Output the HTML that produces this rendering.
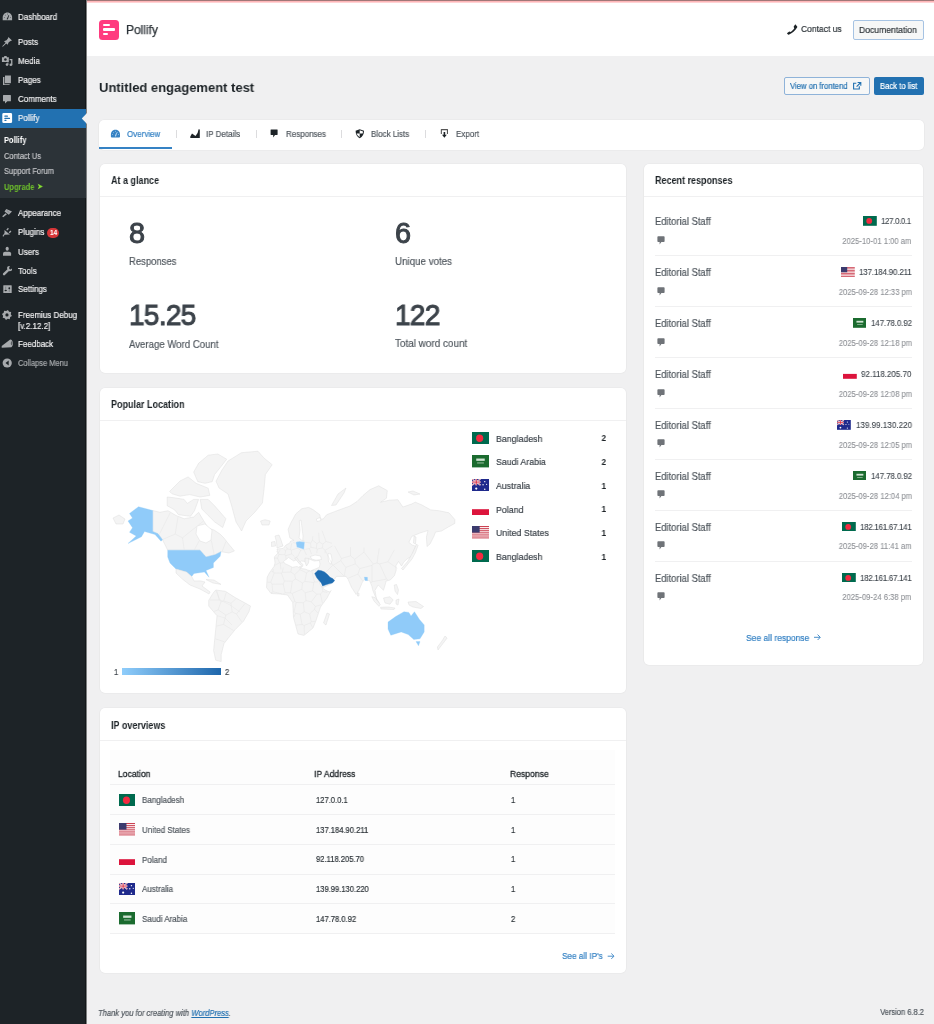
<!DOCTYPE html>
<html><head><meta charset="utf-8"><title>Pollify</title>
<style>
html,body{margin:0;padding:0;width:934px;height:1024px;overflow:hidden;background:#f0f0f1;}
body{position:relative;font-family:"Liberation Sans", sans-serif;}
.t{position:absolute;line-height:1;white-space:nowrap;will-change:transform;}
.r{position:absolute;}
</style></head><body>
<div class="r" style="left:0px;top:0px;width:934px;height:1024px;background:#f0f0f1;"></div>
<div class="r" style="left:0px;top:0px;width:86px;height:1024px;background:#1d2327;"></div>
<div class="r" style="left:85px;top:0px;width:1px;height:1024px;background:#131719;"></div>
<div class="r" style="left:86px;top:0px;width:1px;height:1024px;background:#7d7f80;"></div>
<div class="r" style="left:0px;top:109px;width:86px;height:19px;background:#2271b1;"></div>
<div class="r" style="left:0px;top:128px;width:86px;height:70px;background:#2c3338;"></div>
<svg class="r" style="left:81px;top:113px" width="6" height="11"><path d="M6 0 L0.8 5.5 L6 11 Z" fill="#f0f0f1"/></svg>
<div class="r" style="left:87px;top:0px;width:847px;height:56px;background:#ffffff;"></div>
<div class="r" style="left:87px;top:0px;width:847px;height:1px;background:#a07878;"></div>
<div class="r" style="left:87px;top:1px;width:847px;height:1px;background:#ffb6b8;"></div>
<div class="r" style="left:87px;top:2px;width:847px;height:1px;background:#ffd3d5;"></div>
<div class="t" style="left:17.60px;top:13.08px;font-size:8.960px;color:#f0f0f1;transform:scaleX(0.8929);transform-origin:left top;-webkit-text-stroke:0.2px #f0f0f1;">Dashboard</div>
<div class="t" style="left:17.60px;top:38.18px;font-size:8.960px;color:#f0f0f1;transform:scaleX(0.8929);transform-origin:left top;-webkit-text-stroke:0.2px #f0f0f1;">Posts</div>
<div class="t" style="left:17.60px;top:57.08px;font-size:8.960px;color:#f0f0f1;transform:scaleX(0.8929);transform-origin:left top;-webkit-text-stroke:0.2px #f0f0f1;">Media</div>
<div class="t" style="left:17.60px;top:76.18px;font-size:8.960px;color:#f0f0f1;transform:scaleX(0.8929);transform-origin:left top;-webkit-text-stroke:0.2px #f0f0f1;">Pages</div>
<div class="t" style="left:17.60px;top:95.28px;font-size:8.960px;color:#f0f0f1;transform:scaleX(0.8929);transform-origin:left top;-webkit-text-stroke:0.2px #f0f0f1;">Comments</div>
<div class="t" style="left:17.60px;top:114.38px;font-size:8.960px;color:#f0f0f1;transform:scaleX(0.8929);transform-origin:left top;-webkit-text-stroke:0.2px #f0f0f1;">Pollify</div>
<div class="t" style="left:17.60px;top:209.18px;font-size:8.960px;color:#f0f0f1;transform:scaleX(0.8929);transform-origin:left top;-webkit-text-stroke:0.2px #f0f0f1;">Appearance</div>
<div class="t" style="left:17.60px;top:228.18px;font-size:8.960px;color:#f0f0f1;transform:scaleX(0.8929);transform-origin:left top;-webkit-text-stroke:0.2px #f0f0f1;">Plugins</div>
<div class="t" style="left:17.60px;top:247.58px;font-size:8.960px;color:#f0f0f1;transform:scaleX(0.8929);transform-origin:left top;-webkit-text-stroke:0.2px #f0f0f1;">Users</div>
<div class="t" style="left:17.60px;top:266.58px;font-size:8.960px;color:#f0f0f1;transform:scaleX(0.8929);transform-origin:left top;-webkit-text-stroke:0.2px #f0f0f1;">Tools</div>
<div class="t" style="left:17.60px;top:285.08px;font-size:8.960px;color:#f0f0f1;transform:scaleX(0.8929);transform-origin:left top;-webkit-text-stroke:0.2px #f0f0f1;">Settings</div>
<div class="t" style="left:17.60px;top:310.88px;font-size:8.960px;color:#f0f0f1;transform:scaleX(0.8929);transform-origin:left top;-webkit-text-stroke:0.2px #f0f0f1;">Freemius Debug</div>
<div class="t" style="left:17.60px;top:321.58px;font-size:8.960px;color:#f0f0f1;transform:scaleX(0.8929);transform-origin:left top;-webkit-text-stroke:0.2px #f0f0f1;">[v.2.12.2]</div>
<div class="t" style="left:17.60px;top:339.98px;font-size:8.960px;color:#f0f0f1;transform:scaleX(0.8929);transform-origin:left top;-webkit-text-stroke:0.2px #f0f0f1;">Feedback</div>
<div class="t" style="left:17.60px;top:358.66px;font-size:8.400px;color:#a7aaad;transform:scaleX(0.8929);transform-origin:left top;-webkit-text-stroke-width:0.2px;">Collapse Menu</div>
<div class="t" style="left:4.10px;top:135.56px;font-size:8.400px;color:#ffffff;transform:scaleX(0.8929);transform-origin:left top;font-weight:700;">Pollify</div>
<div class="t" style="left:4.10px;top:151.66px;font-size:8.400px;color:#c3c4c7;transform:scaleX(0.8929);transform-origin:left top;-webkit-text-stroke-width:0.2px;">Contact Us</div>
<div class="t" style="left:4.10px;top:167.26px;font-size:8.400px;color:#c3c4c7;transform:scaleX(0.8929);transform-origin:left top;-webkit-text-stroke-width:0.2px;">Support Forum</div>
<div class="t" style="left:4.10px;top:182.66px;font-size:8.400px;color:#6dbf2b;transform:scaleX(0.8929);transform-origin:left top;font-weight:700;">Upgrade</div>
<div class="t" style="left:37.40px;top:183.34px;font-size:7.840px;color:#86e033;transform:scaleX(0.8929);transform-origin:left top;-webkit-text-stroke-width:0.2px;">&#10148;</div>
<div class="r" style="left:47px;top:227.5px;width:12px;height:10px;border-radius:5px;background:#d63638;"></div>
<div class="t" style="left:49.90px;top:230.49px;font-size:6.600px;color:#fff;font-weight:700;letter-spacing:-0.2px;">14</div>
<div class="r" style="left:99px;top:20px;width:19.5px;height:19.5px;border-radius:3.5px;background:#ff3b7f;"></div>
<div class="r" style="left:103px;top:24.2px;width:6.799999999999997px;height:2.3000000000000007px;background:#fff;border-radius:1px;"></div>
<div class="r" style="left:103px;top:28.4px;width:11.599999999999994px;height:2.400000000000002px;background:#fff;border-radius:1px;"></div>
<div class="r" style="left:103px;top:32.7px;width:4.5px;height:2.299999999999997px;background:#fff;border-radius:1px;"></div>
<div class="t" style="left:126.00px;top:23.69px;font-size:12.360px;color:#2c3338;transform:scaleX(0.9709);transform-origin:left top;-webkit-text-stroke-width:0.25px;">Pollify</div>
<div class="t" style="left:800.60px;top:24.31px;font-size:9.520px;color:#2c3338;transform:scaleX(0.8929);transform-origin:left top;-webkit-text-stroke-width:0.2px;">Contact us</div>
<div class="r" style="left:853px;top:20px;width:68.5px;height:17.5px;border:1px solid #a6c3e3;border-radius:2px;background:#f6f7f7;"></div>
<div class="t" style="left:859.20px;top:24.81px;font-size:9.632px;color:#2c3338;transform:scaleX(0.8929);transform-origin:left top;-webkit-text-stroke-width:0.2px;">Documentation</div>
<div class="t" style="left:98.60px;top:80.82px;font-size:13.390px;color:#1d2327;transform:scaleX(0.9709);transform-origin:left top;font-weight:700;">Untitled engagement test</div>
<div class="r" style="left:784px;top:77px;width:83.5px;height:15.5px;border:1px solid #8fb3d9;border-radius:2px;background:#f6f7f7;"></div>
<div class="t" style="left:790.30px;top:82.27px;font-size:8.624px;color:#2271b1;transform:scaleX(0.8929);transform-origin:left top;-webkit-text-stroke-width:0.2px;">View on frontend</div>
<div class="r" style="left:874px;top:77px;width:49.5px;height:17.5px;border-radius:2px;background:#2271b1;"></div>
<div class="t" style="left:880.20px;top:82.27px;font-size:8.624px;color:#ffffff;transform:scaleX(0.8929);transform-origin:left top;-webkit-text-stroke-width:0.2px;">Back to list</div>
<div class="r" style="left:99px;top:120px;width:824.5px;height:29.6px;border-radius:5px;background:#fff;box-shadow:0 0 0 0.6px #e6e6e7;"></div>
<div class="r" style="left:99px;top:147px;width:72.5px;height:2px;background:#3582c4;"></div>
<div class="t" style="left:126.90px;top:130.08px;font-size:8.960px;color:#3582c4;transform:scaleX(0.8929);transform-origin:left top;-webkit-text-stroke-width:0.2px;">Overview</div>
<div class="t" style="left:205.90px;top:130.08px;font-size:8.960px;color:#50575e;transform:scaleX(0.8929);transform-origin:left top;-webkit-text-stroke-width:0.2px;">IP Details</div>
<div class="t" style="left:285.80px;top:130.08px;font-size:8.960px;color:#50575e;transform:scaleX(0.8929);transform-origin:left top;-webkit-text-stroke-width:0.2px;">Responses</div>
<div class="t" style="left:371.00px;top:130.08px;font-size:8.960px;color:#50575e;transform:scaleX(0.8929);transform-origin:left top;-webkit-text-stroke-width:0.2px;">Block Lists</div>
<div class="t" style="left:455.80px;top:130.08px;font-size:8.960px;color:#50575e;transform:scaleX(0.8929);transform-origin:left top;-webkit-text-stroke-width:0.2px;">Export</div>
<div class="r" style="left:176px;top:129.8px;width:1px;height:8.0px;background:#dcdcde;"></div>
<div class="r" style="left:255.5px;top:129.8px;width:1.0px;height:8.0px;background:#dcdcde;"></div>
<div class="r" style="left:341px;top:129.8px;width:1px;height:8.0px;background:#dcdcde;"></div>
<div class="r" style="left:425.3px;top:129.8px;width:1.0px;height:8.0px;background:#dcdcde;"></div>
<div class="r" style="left:99.5px;top:164px;width:526.5px;height:208.7px;border-radius:5px;background:#fff;box-shadow:0 0 0 0.6px #e6e6e7;"></div>
<div class="r" style="left:99.5px;top:196px;width:526.5px;height:1px;background:#f0f0f1;"></div>
<div class="t" style="left:110.90px;top:176.23px;font-size:10.080px;color:#1d2327;transform:scaleX(0.8929);transform-origin:left top;font-weight:700;">At a glance</div>
<div class="r" style="left:99.5px;top:387.7px;width:526.5px;height:305.3px;border-radius:5px;background:#fff;box-shadow:0 0 0 0.6px #e6e6e7;"></div>
<div class="r" style="left:99.5px;top:420.2px;width:526.5px;height:1.0px;background:#f0f0f1;"></div>
<div class="t" style="left:110.90px;top:400.43px;font-size:10.080px;color:#1d2327;transform:scaleX(0.8929);transform-origin:left top;font-weight:700;">Popular Location</div>
<div class="r" style="left:99.5px;top:708.4px;width:526.5px;height:264.30000000000007px;border-radius:5px;background:#fff;box-shadow:0 0 0 0.6px #e6e6e7;"></div>
<div class="r" style="left:99.5px;top:739.5px;width:526.5px;height:1.0px;background:#f0f0f1;"></div>
<div class="t" style="left:110.90px;top:720.73px;font-size:10.080px;color:#1d2327;transform:scaleX(0.8929);transform-origin:left top;font-weight:700;">IP overviews</div>
<div class="r" style="left:643.7px;top:163.7px;width:279.29999999999995px;height:501.8px;border-radius:5px;background:#fff;box-shadow:0 0 0 0.6px #e6e6e7;"></div>
<div class="r" style="left:643.7px;top:196.2px;width:279.29999999999995px;height:1.0px;background:#f0f0f1;"></div>
<div class="t" style="left:655.10px;top:176.13px;font-size:10.080px;color:#1d2327;transform:scaleX(0.8929);transform-origin:left top;font-weight:700;">Recent responses</div>
<div class="t" style="left:128.60px;top:218.69px;font-size:28.840px;color:#3c434a;transform:scaleX(0.9709);transform-origin:left top;letter-spacing:-0.7px;-webkit-text-stroke:1.0px #3c434a;">8</div>
<div class="t" style="left:395.20px;top:218.69px;font-size:28.840px;color:#3c434a;transform:scaleX(0.9709);transform-origin:left top;letter-spacing:-0.7px;-webkit-text-stroke:1.0px #3c434a;">6</div>
<div class="t" style="left:128.60px;top:301.29px;font-size:28.840px;color:#3c434a;transform:scaleX(0.9709);transform-origin:left top;letter-spacing:-0.7px;-webkit-text-stroke:1.0px #3c434a;">15.25</div>
<div class="t" style="left:395.20px;top:301.29px;font-size:28.840px;color:#3c434a;transform:scaleX(0.9709);transform-origin:left top;letter-spacing:-0.7px;-webkit-text-stroke:1.0px #3c434a;">122</div>
<div class="t" style="left:128.80px;top:256.06px;font-size:10.640px;color:#50575e;transform:scaleX(0.8929);transform-origin:left top;-webkit-text-stroke-width:0.2px;">Responses</div>
<div class="t" style="left:395.40px;top:255.80px;font-size:10.942px;color:#50575e;transform:scaleX(0.8929);transform-origin:left top;-webkit-text-stroke-width:0.2px;">Unique votes</div>
<div class="t" style="left:128.80px;top:338.64px;font-size:10.774px;color:#50575e;transform:scaleX(0.8929);transform-origin:left top;-webkit-text-stroke-width:0.2px;">Average Word Count</div>
<div class="t" style="left:395.40px;top:338.35px;font-size:11.122px;color:#50575e;transform:scaleX(0.8929);transform-origin:left top;-webkit-text-stroke-width:0.2px;">Total word count</div>
<div class="t" style="left:655.30px;top:216.45px;font-size:10.528px;color:#50575e;transform:scaleX(0.8929);transform-origin:left top;-webkit-text-stroke-width:0.2px;">Editorial Staff</div>
<div class="t" style="left:881.40px;top:217.38px;font-size:8.960px;color:#3c434a;transform:scaleX(0.8929);transform-origin:left top;letter-spacing:-0.445px;-webkit-text-stroke-width:0.1px;">127.0.0.1</div>
<div class="t" style="right:22.20px;top:237.06px;font-size:8.512px;color:#8c8f94;transform:scaleX(0.8929);transform-origin:right top;letter-spacing:0.05px;-webkit-text-stroke-width:0.1px;">2025-10-01 1:00 am</div>
<div class="r" style="left:655.3px;top:255.1px;width:256.5px;height:1.0000000000000284px;background:#f0f0f1;"></div>
<svg class="r" style="left:656.5px;top:235.80px" width="8" height="9" viewBox="0 0 8 9"><path d="M1.2 0.3H6.8Q7.6 0.3 7.6 1.1V5.2Q7.6 6 6.8 6H4.4L2.6 8.6V6H1.2Q0.4 6 0.4 5.2V1.1Q0.4 0.3 1.2 0.3Z" fill="#6f7378"/></svg>
<div class="t" style="left:655.30px;top:267.35px;font-size:10.528px;color:#50575e;transform:scaleX(0.8929);transform-origin:left top;-webkit-text-stroke-width:0.2px;">Editorial Staff</div>
<div class="t" style="left:858.80px;top:268.28px;font-size:8.960px;color:#3c434a;transform:scaleX(0.8929);transform-origin:left top;letter-spacing:-0.191px;-webkit-text-stroke-width:0.1px;">137.184.90.211</div>
<div class="t" style="right:22.20px;top:287.96px;font-size:8.512px;color:#8c8f94;transform:scaleX(0.8929);transform-origin:right top;letter-spacing:0.05px;-webkit-text-stroke-width:0.1px;">2025-09-28 12:33 pm</div>
<div class="r" style="left:655.3px;top:306.0px;width:256.5px;height:1.0px;background:#f0f0f1;"></div>
<svg class="r" style="left:656.5px;top:286.70px" width="8" height="9" viewBox="0 0 8 9"><path d="M1.2 0.3H6.8Q7.6 0.3 7.6 1.1V5.2Q7.6 6 6.8 6H4.4L2.6 8.6V6H1.2Q0.4 6 0.4 5.2V1.1Q0.4 0.3 1.2 0.3Z" fill="#6f7378"/></svg>
<div class="t" style="left:655.30px;top:318.25px;font-size:10.528px;color:#50575e;transform:scaleX(0.8929);transform-origin:left top;-webkit-text-stroke-width:0.2px;">Editorial Staff</div>
<div class="t" style="left:870.50px;top:319.18px;font-size:8.960px;color:#3c434a;transform:scaleX(0.8929);transform-origin:left top;letter-spacing:-0.131px;-webkit-text-stroke-width:0.1px;">147.78.0.92</div>
<div class="t" style="right:22.20px;top:338.86px;font-size:8.512px;color:#8c8f94;transform:scaleX(0.8929);transform-origin:right top;letter-spacing:0.05px;-webkit-text-stroke-width:0.1px;">2025-09-28 12:18 pm</div>
<div class="r" style="left:655.3px;top:356.9px;width:256.5px;height:1.0px;background:#f0f0f1;"></div>
<svg class="r" style="left:656.5px;top:337.60px" width="8" height="9" viewBox="0 0 8 9"><path d="M1.2 0.3H6.8Q7.6 0.3 7.6 1.1V5.2Q7.6 6 6.8 6H4.4L2.6 8.6V6H1.2Q0.4 6 0.4 5.2V1.1Q0.4 0.3 1.2 0.3Z" fill="#6f7378"/></svg>
<div class="t" style="left:655.30px;top:369.15px;font-size:10.528px;color:#50575e;transform:scaleX(0.8929);transform-origin:left top;-webkit-text-stroke-width:0.2px;">Editorial Staff</div>
<div class="t" style="left:861.20px;top:370.08px;font-size:8.960px;color:#3c434a;transform:scaleX(0.8929);transform-origin:left top;letter-spacing:-0.017px;-webkit-text-stroke-width:0.1px;">92.118.205.70</div>
<div class="t" style="right:22.20px;top:389.76px;font-size:8.512px;color:#8c8f94;transform:scaleX(0.8929);transform-origin:right top;letter-spacing:0.05px;-webkit-text-stroke-width:0.1px;">2025-09-28 12:08 pm</div>
<div class="r" style="left:655.3px;top:407.79999999999995px;width:256.5px;height:1.0px;background:#f0f0f1;"></div>
<svg class="r" style="left:656.5px;top:388.50px" width="8" height="9" viewBox="0 0 8 9"><path d="M1.2 0.3H6.8Q7.6 0.3 7.6 1.1V5.2Q7.6 6 6.8 6H4.4L2.6 8.6V6H1.2Q0.4 6 0.4 5.2V1.1Q0.4 0.3 1.2 0.3Z" fill="#6f7378"/></svg>
<div class="t" style="left:655.30px;top:420.05px;font-size:10.528px;color:#50575e;transform:scaleX(0.8929);transform-origin:left top;-webkit-text-stroke-width:0.2px;">Editorial Staff</div>
<div class="t" style="left:855.60px;top:420.98px;font-size:8.960px;color:#3c434a;transform:scaleX(0.8929);transform-origin:left top;letter-spacing:0.034px;-webkit-text-stroke-width:0.1px;">139.99.130.220</div>
<div class="t" style="right:22.20px;top:440.66px;font-size:8.512px;color:#8c8f94;transform:scaleX(0.8929);transform-origin:right top;letter-spacing:0.05px;-webkit-text-stroke-width:0.1px;">2025-09-28 12:05 pm</div>
<div class="r" style="left:655.3px;top:458.7px;width:256.5px;height:1.0px;background:#f0f0f1;"></div>
<svg class="r" style="left:656.5px;top:439.40px" width="8" height="9" viewBox="0 0 8 9"><path d="M1.2 0.3H6.8Q7.6 0.3 7.6 1.1V5.2Q7.6 6 6.8 6H4.4L2.6 8.6V6H1.2Q0.4 6 0.4 5.2V1.1Q0.4 0.3 1.2 0.3Z" fill="#6f7378"/></svg>
<div class="t" style="left:655.30px;top:470.95px;font-size:10.528px;color:#50575e;transform:scaleX(0.8929);transform-origin:left top;-webkit-text-stroke-width:0.2px;">Editorial Staff</div>
<div class="t" style="left:870.50px;top:471.88px;font-size:8.960px;color:#3c434a;transform:scaleX(0.8929);transform-origin:left top;letter-spacing:-0.131px;-webkit-text-stroke-width:0.1px;">147.78.0.92</div>
<div class="t" style="right:22.20px;top:491.56px;font-size:8.512px;color:#8c8f94;transform:scaleX(0.8929);transform-origin:right top;letter-spacing:0.05px;-webkit-text-stroke-width:0.1px;">2025-09-28 12:04 pm</div>
<div class="r" style="left:655.3px;top:509.6px;width:256.5px;height:1.0px;background:#f0f0f1;"></div>
<svg class="r" style="left:656.5px;top:490.30px" width="8" height="9" viewBox="0 0 8 9"><path d="M1.2 0.3H6.8Q7.6 0.3 7.6 1.1V5.2Q7.6 6 6.8 6H4.4L2.6 8.6V6H1.2Q0.4 6 0.4 5.2V1.1Q0.4 0.3 1.2 0.3Z" fill="#6f7378"/></svg>
<div class="t" style="left:655.30px;top:521.85px;font-size:10.528px;color:#50575e;transform:scaleX(0.8929);transform-origin:left top;-webkit-text-stroke-width:0.2px;">Editorial Staff</div>
<div class="t" style="left:859.80px;top:522.78px;font-size:8.960px;color:#3c434a;transform:scaleX(0.8929);transform-origin:left top;letter-spacing:-0.328px;-webkit-text-stroke-width:0.1px;">182.161.67.141</div>
<div class="t" style="right:22.20px;top:542.46px;font-size:8.512px;color:#8c8f94;transform:scaleX(0.8929);transform-origin:right top;letter-spacing:0.05px;-webkit-text-stroke-width:0.1px;">2025-09-28 11:41 am</div>
<div class="r" style="left:655.3px;top:560.5px;width:256.5px;height:1.0px;background:#f0f0f1;"></div>
<svg class="r" style="left:656.5px;top:541.20px" width="8" height="9" viewBox="0 0 8 9"><path d="M1.2 0.3H6.8Q7.6 0.3 7.6 1.1V5.2Q7.6 6 6.8 6H4.4L2.6 8.6V6H1.2Q0.4 6 0.4 5.2V1.1Q0.4 0.3 1.2 0.3Z" fill="#6f7378"/></svg>
<div class="t" style="left:655.30px;top:572.75px;font-size:10.528px;color:#50575e;transform:scaleX(0.8929);transform-origin:left top;-webkit-text-stroke-width:0.2px;">Editorial Staff</div>
<div class="t" style="left:859.80px;top:573.68px;font-size:8.960px;color:#3c434a;transform:scaleX(0.8929);transform-origin:left top;letter-spacing:-0.328px;-webkit-text-stroke-width:0.1px;">182.161.67.141</div>
<div class="t" style="right:22.20px;top:593.36px;font-size:8.512px;color:#8c8f94;transform:scaleX(0.8929);transform-origin:right top;letter-spacing:0.05px;-webkit-text-stroke-width:0.1px;">2025-09-24 6:38 pm</div>
<svg class="r" style="left:656.5px;top:592.10px" width="8" height="9" viewBox="0 0 8 9"><path d="M1.2 0.3H6.8Q7.6 0.3 7.6 1.1V5.2Q7.6 6 6.8 6H4.4L2.6 8.6V6H1.2Q0.4 6 0.4 5.2V1.1Q0.4 0.3 1.2 0.3Z" fill="#6f7378"/></svg>
<svg class="r" style="left:863px;top:216.2px" width="13.8" height="9.8" viewBox="0 0 20 14" preserveAspectRatio="none"><rect width="20" height="14" fill="#006a4e"/><circle cx="9" cy="7" r="4.2" fill="#f42a41"/></svg>
<svg class="r" style="left:840.8px;top:267.1px" width="13.8" height="9.8" viewBox="0 0 20 14" preserveAspectRatio="none"><rect width="20" height="14" fill="#fff"/><rect y="0.000" width="20" height="1.077" fill="#c9394a"/><rect y="2.154" width="20" height="1.077" fill="#c9394a"/><rect y="4.308" width="20" height="1.077" fill="#c9394a"/><rect y="6.462" width="20" height="1.077" fill="#c9394a"/><rect y="8.615" width="20" height="1.077" fill="#c9394a"/><rect y="10.769" width="20" height="1.077" fill="#c9394a"/><rect y="12.923" width="20" height="1.077" fill="#c9394a"/><rect width="9" height="7.5" fill="#3c3b6e"/></svg>
<svg class="r" style="left:852.5px;top:318.0px" width="13.8" height="9.8" viewBox="0 0 20 14" preserveAspectRatio="none"><rect width="20" height="14" fill="#1b6b2f"/><rect x="5" y="4" width="10" height="2.6" fill="#cfe3d2"/><rect x="6" y="8.6" width="8" height="0.8" fill="#cfe3d2"/></svg>
<svg class="r" style="left:843px;top:368.9px" width="13.8" height="9.8" viewBox="0 0 20 14" preserveAspectRatio="none"><rect y="7" width="20" height="7" fill="#dc143c"/></svg>
<svg class="r" style="left:837.4px;top:419.8px" width="13.8" height="9.8" viewBox="0 0 20 14" preserveAspectRatio="none"><rect width="20" height="14" fill="#1f2a8c"/><path d="M0 0L10 7M10 0L0 7" stroke="#fff" stroke-width="1.6"/><path d="M0 0L10 7M10 0L0 7" stroke="#d8283c" stroke-width="0.6"/><path d="M5 0V7M0 3.5H10" stroke="#fff" stroke-width="2"/><path d="M5 0V7M0 3.5H10" stroke="#d8283c" stroke-width="1.1"/><circle cx="5" cy="10.8" r="1.3" fill="#fff"/><circle cx="15" cy="3" r="0.8" fill="#fff"/><circle cx="13" cy="6.5" r="0.8" fill="#fff"/><circle cx="17.2" cy="6" r="0.7" fill="#fff"/><circle cx="15" cy="11.5" r="0.9" fill="#fff"/></svg>
<svg class="r" style="left:852.5px;top:470.70000000000005px" width="13.8" height="9.8" viewBox="0 0 20 14" preserveAspectRatio="none"><rect width="20" height="14" fill="#1b6b2f"/><rect x="5" y="4" width="10" height="2.6" fill="#cfe3d2"/><rect x="6" y="8.6" width="8" height="0.8" fill="#cfe3d2"/></svg>
<svg class="r" style="left:842px;top:521.6px" width="13.8" height="9.8" viewBox="0 0 20 14" preserveAspectRatio="none"><rect width="20" height="14" fill="#006a4e"/><circle cx="9" cy="7" r="4.2" fill="#f42a41"/></svg>
<svg class="r" style="left:842px;top:572.5px" width="13.8" height="9.8" viewBox="0 0 20 14" preserveAspectRatio="none"><rect width="20" height="14" fill="#006a4e"/><circle cx="9" cy="7" r="4.2" fill="#f42a41"/></svg>
<div class="t" style="left:746.00px;top:633.21px;font-size:9.520px;color:#3582c4;transform:scaleX(0.8929);transform-origin:left top;-webkit-text-stroke-width:0.2px;">See all response</div>
<svg class="r" style="left:812px;top:632px" width="10" height="10" viewBox="812 632 10 10"><path d="M814 637.3H820M817.6 634.6L820.3 637.3L817.6 640" fill="none" stroke="#3582c4" stroke-width="0.9"/></svg>
<div class="r" style="left:109.8px;top:750px;width:505.2px;height:184px;background:#fdfdfd;"></div>
<div class="t" style="left:117.60px;top:769.01px;font-size:9.632px;color:#1d2327;transform:scaleX(0.8929);transform-origin:left top;-webkit-text-stroke:0.3px #1d2327;">Location</div>
<div class="t" style="left:313.70px;top:769.01px;font-size:9.632px;color:#1d2327;transform:scaleX(0.8929);transform-origin:left top;-webkit-text-stroke:0.3px #1d2327;">IP Address</div>
<div class="t" style="left:509.70px;top:769.01px;font-size:9.632px;color:#1d2327;transform:scaleX(0.8929);transform-origin:left top;-webkit-text-stroke:0.3px #1d2327;">Response</div>
<div class="r" style="left:109.8px;top:784px;width:505.2px;height:1px;background:#f0f0f1;"></div>
<svg class="r" style="left:118.9px;top:793.5px" width="16.6" height="12.4" viewBox="0 0 20 14" preserveAspectRatio="none"><rect width="20" height="14" fill="#006a4e"/><circle cx="9" cy="7" r="4.2" fill="#f42a41"/></svg>
<div class="t" style="left:141.60px;top:796.18px;font-size:8.960px;color:#50575e;transform:scaleX(0.8929);transform-origin:left top;-webkit-text-stroke-width:0.2px;">Bangladesh</div>
<div class="t" style="left:315.50px;top:796.06px;font-size:8.512px;color:#2c3338;transform:scaleX(0.8929);transform-origin:left top;-webkit-text-stroke-width:0.2px;">127.0.0.1</div>
<div class="t" style="left:511.30px;top:796.06px;font-size:8.512px;color:#2c3338;transform:scaleX(0.8929);transform-origin:left top;-webkit-text-stroke-width:0.2px;">1</div>
<div class="r" style="left:109.8px;top:814.2px;width:505.2px;height:1.0px;background:#f0f0f1;"></div>
<svg class="r" style="left:118.9px;top:823.2px" width="16.6" height="12.4" viewBox="0 0 20 14" preserveAspectRatio="none"><rect width="20" height="14" fill="#fff"/><rect y="0.000" width="20" height="1.077" fill="#c9394a"/><rect y="2.154" width="20" height="1.077" fill="#c9394a"/><rect y="4.308" width="20" height="1.077" fill="#c9394a"/><rect y="6.462" width="20" height="1.077" fill="#c9394a"/><rect y="8.615" width="20" height="1.077" fill="#c9394a"/><rect y="10.769" width="20" height="1.077" fill="#c9394a"/><rect y="12.923" width="20" height="1.077" fill="#c9394a"/><rect width="9" height="7.5" fill="#3c3b6e"/></svg>
<div class="t" style="left:141.60px;top:825.88px;font-size:8.960px;color:#50575e;transform:scaleX(0.8929);transform-origin:left top;-webkit-text-stroke-width:0.2px;">United States</div>
<div class="t" style="left:315.50px;top:825.76px;font-size:8.512px;color:#2c3338;transform:scaleX(0.8929);transform-origin:left top;-webkit-text-stroke-width:0.2px;">137.184.90.211</div>
<div class="t" style="left:511.30px;top:825.76px;font-size:8.512px;color:#2c3338;transform:scaleX(0.8929);transform-origin:left top;-webkit-text-stroke-width:0.2px;">1</div>
<div class="r" style="left:109.8px;top:843.9000000000001px;width:505.2px;height:1.0px;background:#f0f0f1;"></div>
<svg class="r" style="left:118.9px;top:852.9px" width="16.6" height="12.4" viewBox="0 0 20 14" preserveAspectRatio="none"><rect y="7" width="20" height="7" fill="#dc143c"/></svg>
<div class="t" style="left:141.60px;top:855.58px;font-size:8.960px;color:#50575e;transform:scaleX(0.8929);transform-origin:left top;-webkit-text-stroke-width:0.2px;">Poland</div>
<div class="t" style="left:315.50px;top:855.46px;font-size:8.512px;color:#2c3338;transform:scaleX(0.8929);transform-origin:left top;-webkit-text-stroke-width:0.2px;">92.118.205.70</div>
<div class="t" style="left:511.30px;top:855.46px;font-size:8.512px;color:#2c3338;transform:scaleX(0.8929);transform-origin:left top;-webkit-text-stroke-width:0.2px;">1</div>
<div class="r" style="left:109.8px;top:873.6px;width:505.2px;height:1.0px;background:#f0f0f1;"></div>
<svg class="r" style="left:118.9px;top:882.6px" width="16.6" height="12.4" viewBox="0 0 20 14" preserveAspectRatio="none"><rect width="20" height="14" fill="#1f2a8c"/><path d="M0 0L10 7M10 0L0 7" stroke="#fff" stroke-width="1.6"/><path d="M0 0L10 7M10 0L0 7" stroke="#d8283c" stroke-width="0.6"/><path d="M5 0V7M0 3.5H10" stroke="#fff" stroke-width="2"/><path d="M5 0V7M0 3.5H10" stroke="#d8283c" stroke-width="1.1"/><circle cx="5" cy="10.8" r="1.3" fill="#fff"/><circle cx="15" cy="3" r="0.8" fill="#fff"/><circle cx="13" cy="6.5" r="0.8" fill="#fff"/><circle cx="17.2" cy="6" r="0.7" fill="#fff"/><circle cx="15" cy="11.5" r="0.9" fill="#fff"/></svg>
<div class="t" style="left:141.60px;top:885.28px;font-size:8.960px;color:#50575e;transform:scaleX(0.8929);transform-origin:left top;-webkit-text-stroke-width:0.2px;">Australia</div>
<div class="t" style="left:315.50px;top:885.16px;font-size:8.512px;color:#2c3338;transform:scaleX(0.8929);transform-origin:left top;-webkit-text-stroke-width:0.2px;">139.99.130.220</div>
<div class="t" style="left:511.30px;top:885.16px;font-size:8.512px;color:#2c3338;transform:scaleX(0.8929);transform-origin:left top;-webkit-text-stroke-width:0.2px;">1</div>
<div class="r" style="left:109.8px;top:903.3000000000001px;width:505.2px;height:1.0px;background:#f0f0f1;"></div>
<svg class="r" style="left:118.9px;top:912.3px" width="16.6" height="12.4" viewBox="0 0 20 14" preserveAspectRatio="none"><rect width="20" height="14" fill="#1b6b2f"/><rect x="5" y="4" width="10" height="2.6" fill="#cfe3d2"/><rect x="6" y="8.6" width="8" height="0.8" fill="#cfe3d2"/></svg>
<div class="t" style="left:141.60px;top:914.98px;font-size:8.960px;color:#50575e;transform:scaleX(0.8929);transform-origin:left top;-webkit-text-stroke-width:0.2px;">Saudi Arabia</div>
<div class="t" style="left:315.50px;top:914.86px;font-size:8.512px;color:#2c3338;transform:scaleX(0.8929);transform-origin:left top;-webkit-text-stroke-width:0.2px;">147.78.0.92</div>
<div class="t" style="left:511.30px;top:914.86px;font-size:8.512px;color:#2c3338;transform:scaleX(0.8929);transform-origin:left top;-webkit-text-stroke-width:0.2px;">2</div>
<div class="r" style="left:109.8px;top:933.0px;width:505.2px;height:1.0px;background:#f0f0f1;"></div>
<div class="t" style="left:562.00px;top:952.39px;font-size:9.184px;color:#3582c4;transform:scaleX(0.8929);transform-origin:left top;-webkit-text-stroke-width:0.2px;">See all IP's</div>
<svg class="r" style="left:605px;top:951px" width="10" height="10" viewBox="605 951 10 10"><path d="M607.7 956.2H613.8M611.3 953.5L614 956.2L611.3 958.9" fill="none" stroke="#3582c4" stroke-width="0.9"/></svg>
<svg class="r" style="left:472px;top:431.59999999999997px" width="17" height="12.4" viewBox="0 0 20 14" preserveAspectRatio="none"><rect width="20" height="14" fill="#006a4e"/><circle cx="9" cy="7" r="4.2" fill="#f42a41"/></svg>
<div class="t" style="left:495.60px;top:433.82px;font-size:9.856px;color:#3c434a;transform:scaleX(0.8929);transform-origin:left top;-webkit-text-stroke-width:0.2px;">Bangladesh</div>
<div class="t" style="right:327.50px;top:434.39px;font-size:9.184px;color:#1d2327;transform:scaleX(0.8929);transform-origin:right top;font-weight:700;">2</div>
<svg class="r" style="left:472px;top:455.24999999999994px" width="17" height="12.4" viewBox="0 0 20 14" preserveAspectRatio="none"><rect width="20" height="14" fill="#1b6b2f"/><rect x="5" y="4" width="10" height="2.6" fill="#cfe3d2"/><rect x="6" y="8.6" width="8" height="0.8" fill="#cfe3d2"/></svg>
<div class="t" style="left:495.60px;top:457.47px;font-size:9.856px;color:#3c434a;transform:scaleX(0.8929);transform-origin:left top;-webkit-text-stroke-width:0.2px;">Saudi Arabia</div>
<div class="t" style="right:327.50px;top:458.04px;font-size:9.184px;color:#1d2327;transform:scaleX(0.8929);transform-origin:right top;font-weight:700;">2</div>
<svg class="r" style="left:472px;top:478.9px" width="17" height="12.4" viewBox="0 0 20 14" preserveAspectRatio="none"><rect width="20" height="14" fill="#1f2a8c"/><path d="M0 0L10 7M10 0L0 7" stroke="#fff" stroke-width="1.6"/><path d="M0 0L10 7M10 0L0 7" stroke="#d8283c" stroke-width="0.6"/><path d="M5 0V7M0 3.5H10" stroke="#fff" stroke-width="2"/><path d="M5 0V7M0 3.5H10" stroke="#d8283c" stroke-width="1.1"/><circle cx="5" cy="10.8" r="1.3" fill="#fff"/><circle cx="15" cy="3" r="0.8" fill="#fff"/><circle cx="13" cy="6.5" r="0.8" fill="#fff"/><circle cx="17.2" cy="6" r="0.7" fill="#fff"/><circle cx="15" cy="11.5" r="0.9" fill="#fff"/></svg>
<div class="t" style="left:495.60px;top:481.12px;font-size:9.856px;color:#3c434a;transform:scaleX(0.8929);transform-origin:left top;-webkit-text-stroke-width:0.2px;">Australia</div>
<div class="t" style="right:327.50px;top:481.69px;font-size:9.184px;color:#1d2327;transform:scaleX(0.8929);transform-origin:right top;font-weight:700;">1</div>
<svg class="r" style="left:472px;top:502.5499999999999px" width="17" height="12.4" viewBox="0 0 20 14" preserveAspectRatio="none"><rect y="7" width="20" height="7" fill="#dc143c"/></svg>
<div class="t" style="left:495.60px;top:504.77px;font-size:9.856px;color:#3c434a;transform:scaleX(0.8929);transform-origin:left top;-webkit-text-stroke-width:0.2px;">Poland</div>
<div class="t" style="right:327.50px;top:505.34px;font-size:9.184px;color:#1d2327;transform:scaleX(0.8929);transform-origin:right top;font-weight:700;">1</div>
<svg class="r" style="left:472px;top:526.2px" width="17" height="12.4" viewBox="0 0 20 14" preserveAspectRatio="none"><rect width="20" height="14" fill="#fff"/><rect y="0.000" width="20" height="1.077" fill="#c9394a"/><rect y="2.154" width="20" height="1.077" fill="#c9394a"/><rect y="4.308" width="20" height="1.077" fill="#c9394a"/><rect y="6.462" width="20" height="1.077" fill="#c9394a"/><rect y="8.615" width="20" height="1.077" fill="#c9394a"/><rect y="10.769" width="20" height="1.077" fill="#c9394a"/><rect y="12.923" width="20" height="1.077" fill="#c9394a"/><rect width="9" height="7.5" fill="#3c3b6e"/></svg>
<div class="t" style="left:495.60px;top:528.42px;font-size:9.856px;color:#3c434a;transform:scaleX(0.8929);transform-origin:left top;-webkit-text-stroke-width:0.2px;">United States</div>
<div class="t" style="right:327.50px;top:528.99px;font-size:9.184px;color:#1d2327;transform:scaleX(0.8929);transform-origin:right top;font-weight:700;">1</div>
<svg class="r" style="left:472px;top:549.85px" width="17" height="12.4" viewBox="0 0 20 14" preserveAspectRatio="none"><rect width="20" height="14" fill="#006a4e"/><circle cx="9" cy="7" r="4.2" fill="#f42a41"/></svg>
<div class="t" style="left:495.60px;top:552.07px;font-size:9.856px;color:#3c434a;transform:scaleX(0.8929);transform-origin:left top;-webkit-text-stroke-width:0.2px;">Bangladesh</div>
<div class="t" style="right:327.50px;top:552.64px;font-size:9.184px;color:#1d2327;transform:scaleX(0.8929);transform-origin:right top;font-weight:700;">1</div>
<div class="t" style="left:98.20px;top:1008.96px;font-size:8.512px;color:#50575e;transform:scaleX(0.8929);transform-origin:left top;-webkit-text-stroke-width:0.2px;font-style:italic;">Thank you for creating with <span style="color:#2271b1;text-decoration:underline">WordPress</span>.</div>
<div class="t" style="right:10.60px;top:1008.46px;font-size:8.400px;color:#50575e;transform:scaleX(0.8929);transform-origin:right top;-webkit-text-stroke-width:0.2px;">Version 6.8.2</div>
<svg class="r" style="left:100px;top:421px" width="360" height="270" viewBox="100 421 360 270"><path d="M216.0 481.2 L222.0 470.0 L228.0 461.0 L241.4 452.7 L258.0 451.2 L264.0 458.0 L272.2 464.7 L265.4 474.5 L264.0 489.5 L262.4 503.0 L255.0 512.0 L246.0 521.0 L241.6 531.0 L236.0 522.0 L231.7 506.0 L228.0 494.0 L219.0 488.0Z" fill="#f4f4f4" stroke="#dcdcdc" stroke-width="0.45" stroke-linejoin="round"/><path d="M193.7 472.1 L198.6 463.3 L208.2 455.2 L217.8 454.0 L226.7 459.2 L221.0 466.5 L214.6 474.5 L212.2 481.7 L205.0 483.3 L197.8 481.7Z" fill="#f4f4f4" stroke="#dcdcdc" stroke-width="0.45" stroke-linejoin="round"/><path d="M169.6 491.4 L180.0 481.0 L188.1 476.9 L196.1 483.3 L208.2 488.2 L209.8 495.4 L200.2 497.0 L189.7 494.6 L180.0 496.2 L172.0 493.8Z" fill="#f4f4f4" stroke="#dcdcdc" stroke-width="0.45" stroke-linejoin="round"/><path d="M167.2 497.0 L174.5 497.8 L184.1 499.4 L187.3 503.4 L193.7 499.4 L198.6 499.4 L194.5 510.7 L190.5 516.3 L178.5 514.7 L174.5 509.8 L167.2 505.8Z" fill="#f4f4f4" stroke="#dcdcdc" stroke-width="0.45" stroke-linejoin="round"/><path d="M200.2 499.4 L208.2 499.4 L214.6 505.8 L225.9 518.7 L222.7 527.5 L214.6 521.9 L208.2 515.5 L201.8 509.0Z" fill="#f4f4f4" stroke="#dcdcdc" stroke-width="0.45" stroke-linejoin="round"/><path d="M152.7 510.5 L160.0 512.3 L168.0 510.7 L176.0 515.5 L184.1 518.7 L193.7 517.0 L198.6 512.3 L203.4 520.3 L208.2 528.0 L214.0 530.0 L220.0 534.0 L224.0 538.0 L227.0 542.0 L234.4 551.0 L229.0 553.0 L221.0 551.7 L215.0 554.7 L206.0 557.0 L200.0 550.2 L167.7 550.2 L162.5 539.7 L158.0 533.7 L152.7 531.5Z" fill="#f4f4f4" stroke="#dcdcdc" stroke-width="0.45" stroke-linejoin="round"/><path d="M197.0 526.0 L205.0 524.0 L212.0 530.0 L211.0 540.0 L206.0 543.0 L200.0 541.0 L196.0 534.0Z" fill="#ffffff" stroke="#dcdcdc" stroke-width="0.45" stroke-linejoin="round"/><path d="M129.5 513.5 L138.5 506.7 L152.7 510.5 L152.7 531.5 L158.0 533.7 L162.5 539.7 L161.0 541.2 L155.0 534.5 L144.5 531.5 L141.5 536.7 L128.0 543.5 L136.2 536.0 L129.5 532.2 L132.5 527.7 L128.0 521.0 L132.5 518.0Z" fill="#90cbf9" stroke="#90cbf9" stroke-width="0.3" stroke-linejoin="round"/><path d="M113.0 518.0 L119.0 515.0 L125.0 519.0 L123.0 524.0 L116.0 524.0Z" fill="#f4f4f4" stroke="#dcdcdc" stroke-width="0.45" stroke-linejoin="round"/><path d="M167.7 550.2 L200.0 550.2 L206.0 557.0 L215.0 554.7 L221.0 551.7 L220.2 556.2 L213.4 563.0 L213.4 567.5 L206.0 570.5 L209.0 577.2 L204.4 572.0 L194.0 573.5 L191.7 576.5 L186.5 572.0 L176.0 569.0 L170.0 563.0 L167.7 557.0Z" fill="#90cbf9" stroke="#90cbf9" stroke-width="0.3" stroke-linejoin="round"/><path d="M176.0 569.0 L186.5 572.0 L191.7 576.5 L194.0 581.0 L200.4 580.9 L205.0 582.0 L202.0 586.0 L210.1 592.0 L209.0 594.0 L200.0 589.0 L190.0 585.0 L182.3 579.0 L176.0 573.0Z" fill="#f4f4f4" stroke="#dcdcdc" stroke-width="0.45" stroke-linejoin="round"/><path d="M206.0 579.5 L214.0 580.0 L221.0 584.4 L213.0 583.0Z" fill="#f4f4f4" stroke="#dcdcdc" stroke-width="0.45" stroke-linejoin="round"/><path d="M212.9 593.4 L215.7 590.0 L225.4 591.3 L235.2 597.6 L250.5 606.0 L249.0 611.5 L243.5 621.2 L235.2 629.6 L229.6 636.5 L224.0 643.5 L221.2 654.6 L221.2 661.6 L215.7 660.2 L213.6 650.5 L215.7 629.6 L217.0 615.7 L208.7 606.0 L208.7 600.4Z" fill="#f4f4f4" stroke="#dcdcdc" stroke-width="0.45" stroke-linejoin="round"/><path d="M215.7 590.0 L220.0 600.0 L230.0 605.0 L240.0 612.0" fill="none" stroke="#e2e2e2" stroke-width="0.4"/><path d="M217.0 615.7 L225.0 618.0 L232.0 625.0" fill="none" stroke="#e2e2e2" stroke-width="0.4"/><path d="M260.5 521.0 L265.0 519.7 L270.2 521.0 L269.0 525.0 L262.0 525.0Z" fill="#f4f4f4" stroke="#dcdcdc" stroke-width="0.45" stroke-linejoin="round"/><path d="M275.0 536.0 L279.0 535.0 L281.0 540.0 L283.0 546.0 L277.0 548.0 L276.5 542.0Z" fill="#f4f4f4" stroke="#dcdcdc" stroke-width="0.45" stroke-linejoin="round"/><path d="M271.5 542.0 L275.0 541.5 L275.5 546.0 L271.5 546.5Z" fill="#f4f4f4" stroke="#dcdcdc" stroke-width="0.45" stroke-linejoin="round"/><path d="M288.1 529.3 L290.7 523.3 L295.8 513.8 L301.8 508.7 L308.7 507.4 L313.0 509.6 L319.8 514.7 L320.7 519.0 L323.2 519.0 L326.7 514.7 L337.8 510.4 L345.0 507.8 L350.0 506.0 L357.0 501.5 L363.0 495.5 L370.0 489.6 L378.7 485.8 L387.3 490.6 L386.4 498.3 L380.6 502.2 L389.3 500.2 L397.9 499.7 L402.8 507.0 L411.4 504.1 L415.3 502.2 L422.0 505.0 L430.7 509.9 L439.4 510.8 L449.0 512.8 L454.8 519.5 L454.8 523.4 L448.0 527.2 L441.3 531.1 L435.5 532.0 L434.0 536.0 L430.0 544.0 L427.0 546.5 L426.4 537.0 L428.0 530.5 L420.0 533.0 L411.8 536.4 L408.9 542.3 L412.0 545.0 L415.7 546.2 L413.5 551.0 L411.8 556.0 L407.0 559.0 L404.0 561.8 L401.5 566.0 L398.5 561.4 L396.0 565.7 L396.2 570.0 L394.5 575.5 L390.3 580.0 L386.0 581.0 L385.7 582.8 L383.5 590.3 L378.2 585.0 L375.0 590.3 L377.1 603.2 L379.3 603.2 L375.0 595.7 L372.8 590.3 L371.8 586.0 L369.6 580.7 L364.3 579.6 L362.1 582.8 L358.9 590.3 L356.2 594.6 L351.4 587.1 L348.2 579.6 L346.1 576.4 L336.4 576.4 L334.3 579.6 L334.2 581.0 L330.0 584.5 L323.0 587.5 L321.0 586.5 L325.0 590.0 L329.5 592.0 L331.0 590.5 L327.0 598.0 L320.5 607.0 L316.0 620.5 L313.0 628.0 L304.0 635.4 L298.0 634.0 L293.5 617.5 L292.7 602.5 L287.5 595.0 L280.0 594.0 L271.0 593.5 L266.5 587.5 L267.2 577.0 L270.0 572.0 L274.0 566.5 L275.0 563.0 L274.3 557.0 L278.0 553.0 L277.0 549.0 L283.0 548.5 L286.0 545.0 L289.8 543.0 L290.7 541.0 L294.1 540.4 L289.8 537.8Z" fill="#f4f4f4" stroke="#dcdcdc" stroke-width="0.45" stroke-linejoin="round"/><path d="M283.4 561.5 L288.6 557.5 L293.7 561.0 L297.0 559.5 L299.0 563.0 L301.4 561.0 L305.0 561.5 L309.1 559.0 L314.0 561.0 L319.4 560.5 L320.0 564.0 L319.4 567.3 L314.0 569.5 L310.4 571.1 L305.0 569.0 L301.4 568.6 L297.0 566.5 L292.4 567.3 L288.0 565.0 L284.7 563.5Z" fill="#ffffff" stroke="#dcdcdc" stroke-width="0.45" stroke-linejoin="round"/><path d="M310.4 556.5 L315.0 555.0 L320.5 556.0 L321.5 559.5 L316.0 560.2 L311.5 559.0Z" fill="#ffffff" stroke="#dcdcdc" stroke-width="0.45" stroke-linejoin="round"/><path d="M328.0 553.6 L331.0 554.0 L332.1 560.0 L331.0 564.3 L328.5 562.0Z" fill="#ffffff" stroke="#dcdcdc" stroke-width="0.45" stroke-linejoin="round"/><path d="M315.5 570.5 L317.0 570.0 L322.5 585.5 L321.0 586.5Z" fill="#ffffff" stroke="#dcdcdc" stroke-width="0.45" stroke-linejoin="round"/><path d="M299.3 520.7 L301.0 520.0 L303.0 536.0 L302.7 541.0 L299.0 538.0 L300.0 530.0Z" fill="#ffffff" stroke="#dcdcdc" stroke-width="0.45" stroke-linejoin="round"/><path d="M316.4 519.0 L320.0 517.5 L321.0 520.5 L317.0 521.5Z" fill="#ffffff" stroke="#dcdcdc" stroke-width="0.45" stroke-linejoin="round"/><path d="M294.5 558.0 L297.0 557.5 L299.0 561.0 L303.0 564.5 L302.5 566.5 L300.5 565.0 L297.5 561.5Z" fill="#f4f4f4" stroke="#dcdcdc" stroke-width="0.45" stroke-linejoin="round"/><path d="M299.5 566.5 L302.0 566.8 L300.5 568.0Z" fill="#f4f4f4" stroke="#dcdcdc" stroke-width="0.45" stroke-linejoin="round"/><path d="M305.0 558.0 L309.0 558.5 L308.5 563.0 L306.5 566.0 L305.0 562.0Z" fill="#f4f4f4" stroke="#dcdcdc" stroke-width="0.45" stroke-linejoin="round"/><path d="M331.5 505.5 L338.0 494.0 L346.0 488.0 L344.0 493.0 L336.0 505.0Z" fill="#f4f4f4" stroke="#dcdcdc" stroke-width="0.45" stroke-linejoin="round"/><path d="M408.0 492.0 L413.0 491.0 L420.0 494.0 L414.0 495.0Z" fill="#f4f4f4" stroke="#dcdcdc" stroke-width="0.45" stroke-linejoin="round"/><path d="M327.0 613.0 L329.5 614.0 L326.0 625.0 L323.5 623.0Z" fill="#f4f4f4" stroke="#dcdcdc" stroke-width="0.45" stroke-linejoin="round"/><path d="M357.5 593.0 L359.0 593.0 L359.0 596.0 L357.5 596.0Z" fill="#f4f4f4" stroke="#dcdcdc" stroke-width="0.45" stroke-linejoin="round"/><path d="M416.5 544.0 L418.0 545.5 L415.5 552.5 L412.0 559.0 L403.0 570.0 L401.5 568.5 L408.0 561.0 L413.0 552.0Z" fill="#f4f4f4" stroke="#dcdcdc" stroke-width="0.45" stroke-linejoin="round"/><path d="M414.0 536.0 L416.0 537.0 L415.5 544.0 L413.5 543.0Z" fill="#f4f4f4" stroke="#dcdcdc" stroke-width="0.45" stroke-linejoin="round"/><path d="M394.2 585.0 L396.5 584.5 L398.5 590.0 L397.5 594.6 L395.0 591.0Z" fill="#f4f4f4" stroke="#dcdcdc" stroke-width="0.45" stroke-linejoin="round"/><path d="M371.8 596.7 L375.0 597.5 L380.3 604.5 L379.0 606.4 L374.0 601.0Z" fill="#f4f4f4" stroke="#dcdcdc" stroke-width="0.45" stroke-linejoin="round"/><path d="M383.5 598.0 L390.0 596.7 L393.2 600.0 L390.0 604.2 L385.0 603.0Z" fill="#f4f4f4" stroke="#dcdcdc" stroke-width="0.45" stroke-linejoin="round"/><path d="M380.5 607.3 L388.0 607.0 L395.0 608.0 L394.0 609.5 L381.0 609.0Z" fill="#f4f4f4" stroke="#dcdcdc" stroke-width="0.45" stroke-linejoin="round"/><path d="M396.0 600.0 L399.0 599.0 L398.0 605.0 L396.0 604.0Z" fill="#f4f4f4" stroke="#dcdcdc" stroke-width="0.45" stroke-linejoin="round"/><path d="M408.0 602.0 L416.0 601.5 L423.5 606.5 L421.0 608.5 L413.0 607.0 L409.0 605.0Z" fill="#f4f4f4" stroke="#dcdcdc" stroke-width="0.45" stroke-linejoin="round"/><path d="M271.1 592.7 L272.2 592.3" fill="none" stroke="#e1e1e1" stroke-width="0.4"/><path d="M272.2 592.3 L272.8 591.7" fill="none" stroke="#e1e1e1" stroke-width="0.4"/><path d="M272.8 591.7 L272.0 584.2" fill="none" stroke="#e1e1e1" stroke-width="0.4"/><path d="M272.0 584.2 L270.8 582.2" fill="none" stroke="#e1e1e1" stroke-width="0.4"/><path d="M270.8 582.2 L267.5 582.3" fill="none" stroke="#e1e1e1" stroke-width="0.4"/><path d="M272.3 593.0 L272.2 592.3" fill="none" stroke="#e1e1e1" stroke-width="0.4"/><path d="M282.1 593.9 L272.8 591.7" fill="none" stroke="#e1e1e1" stroke-width="0.4"/><path d="M270.8 582.2 L274.2 573.0" fill="none" stroke="#e1e1e1" stroke-width="0.4"/><path d="M274.2 573.0 L273.2 571.8" fill="none" stroke="#e1e1e1" stroke-width="0.4"/><path d="M273.2 571.8 L271.5 571.5" fill="none" stroke="#e1e1e1" stroke-width="0.4"/><path d="M273.1 569.0 L273.2 571.8" fill="none" stroke="#e1e1e1" stroke-width="0.4"/><path d="M274.2 573.0 L281.3 573.1" fill="none" stroke="#e1e1e1" stroke-width="0.4"/><path d="M281.3 573.1 L282.2 572.3" fill="none" stroke="#e1e1e1" stroke-width="0.4"/><path d="M282.2 572.3 L283.3 567.5" fill="none" stroke="#e1e1e1" stroke-width="0.4"/><path d="M272.0 584.2 L283.2 584.1" fill="none" stroke="#e1e1e1" stroke-width="0.4"/><path d="M283.2 584.1 L284.4 581.0" fill="none" stroke="#e1e1e1" stroke-width="0.4"/><path d="M284.4 581.0 L281.3 573.1" fill="none" stroke="#e1e1e1" stroke-width="0.4"/><path d="M283.3 594.0 L285.2 592.8" fill="none" stroke="#e1e1e1" stroke-width="0.4"/><path d="M285.2 592.8 L283.2 584.1" fill="none" stroke="#e1e1e1" stroke-width="0.4"/><path d="M293.2 602.1 L294.9 601.4" fill="none" stroke="#e1e1e1" stroke-width="0.4"/><path d="M294.9 601.4 L292.1 593.5" fill="none" stroke="#e1e1e1" stroke-width="0.4"/><path d="M292.1 593.5 L290.5 592.8" fill="none" stroke="#e1e1e1" stroke-width="0.4"/><path d="M290.5 592.8 L285.2 592.8" fill="none" stroke="#e1e1e1" stroke-width="0.4"/><path d="M294.1 616.9 L295.5 613.3" fill="none" stroke="#e1e1e1" stroke-width="0.4"/><path d="M295.5 613.3 L294.1 611.7" fill="none" stroke="#e1e1e1" stroke-width="0.4"/><path d="M294.1 611.7 L293.8 611.7" fill="none" stroke="#e1e1e1" stroke-width="0.4"/><path d="M290.5 592.8 L292.3 581.2" fill="none" stroke="#e1e1e1" stroke-width="0.4"/><path d="M292.3 581.2 L284.4 581.0" fill="none" stroke="#e1e1e1" stroke-width="0.4"/><path d="M304.3 634.3 L304.2 625.5" fill="none" stroke="#e1e1e1" stroke-width="0.4"/><path d="M304.2 625.5 L302.1 624.5" fill="none" stroke="#e1e1e1" stroke-width="0.4"/><path d="M302.1 624.5 L296.2 625.1" fill="none" stroke="#e1e1e1" stroke-width="0.4"/><path d="M302.1 624.5 L300.1 614.3" fill="none" stroke="#e1e1e1" stroke-width="0.4"/><path d="M300.1 614.3 L295.5 613.3" fill="none" stroke="#e1e1e1" stroke-width="0.4"/><path d="M292.1 593.5 L301.8 589.2" fill="none" stroke="#e1e1e1" stroke-width="0.4"/><path d="M301.8 589.2 L302.5 582.9" fill="none" stroke="#e1e1e1" stroke-width="0.4"/><path d="M302.5 582.9 L295.5 578.9" fill="none" stroke="#e1e1e1" stroke-width="0.4"/><path d="M295.5 578.9 L292.3 581.2" fill="none" stroke="#e1e1e1" stroke-width="0.4"/><path d="M295.5 578.9 L294.7 574.7" fill="none" stroke="#e1e1e1" stroke-width="0.4"/><path d="M294.7 574.7 L290.9 572.1" fill="none" stroke="#e1e1e1" stroke-width="0.4"/><path d="M290.9 572.1 L282.2 572.3" fill="none" stroke="#e1e1e1" stroke-width="0.4"/><path d="M290.9 572.1 L291.6 567.3" fill="none" stroke="#e1e1e1" stroke-width="0.4"/><path d="M299.9 568.6 L299.9 569.7" fill="none" stroke="#e1e1e1" stroke-width="0.4"/><path d="M299.9 569.7 L306.5 572.8" fill="none" stroke="#e1e1e1" stroke-width="0.4"/><path d="M306.5 572.8 L310.0 570.5" fill="none" stroke="#e1e1e1" stroke-width="0.4"/><path d="M294.1 611.7 L296.2 602.5" fill="none" stroke="#e1e1e1" stroke-width="0.4"/><path d="M296.2 602.5 L294.9 601.4" fill="none" stroke="#e1e1e1" stroke-width="0.4"/><path d="M300.1 614.3 L304.3 611.8" fill="none" stroke="#e1e1e1" stroke-width="0.4"/><path d="M304.3 611.8 L303.4 602.7" fill="none" stroke="#e1e1e1" stroke-width="0.4"/><path d="M303.4 602.7 L296.2 602.5" fill="none" stroke="#e1e1e1" stroke-width="0.4"/><path d="M303.4 602.7 L306.0 600.6" fill="none" stroke="#e1e1e1" stroke-width="0.4"/><path d="M306.0 600.6 L305.2 592.8" fill="none" stroke="#e1e1e1" stroke-width="0.4"/><path d="M305.2 592.8 L301.8 589.2" fill="none" stroke="#e1e1e1" stroke-width="0.4"/><path d="M294.7 574.7 L299.9 569.7" fill="none" stroke="#e1e1e1" stroke-width="0.4"/><path d="M311.6 570.4 L311.7 570.4" fill="none" stroke="#e1e1e1" stroke-width="0.4"/><path d="M311.7 570.4 L314.1 570.3" fill="none" stroke="#e1e1e1" stroke-width="0.4"/><path d="M302.5 582.9 L304.9 581.4" fill="none" stroke="#e1e1e1" stroke-width="0.4"/><path d="M304.9 581.4 L306.5 572.8" fill="none" stroke="#e1e1e1" stroke-width="0.4"/><path d="M312.6 627.5 L310.3 622.9" fill="none" stroke="#e1e1e1" stroke-width="0.4"/><path d="M310.3 622.9 L304.2 625.5" fill="none" stroke="#e1e1e1" stroke-width="0.4"/><path d="M305.2 592.8 L312.6 590.8" fill="none" stroke="#e1e1e1" stroke-width="0.4"/><path d="M312.6 590.8 L313.8 582.5" fill="none" stroke="#e1e1e1" stroke-width="0.4"/><path d="M313.8 582.5 L304.9 581.4" fill="none" stroke="#e1e1e1" stroke-width="0.4"/><path d="M310.3 622.9 L311.3 621.7" fill="none" stroke="#e1e1e1" stroke-width="0.4"/><path d="M311.3 621.7 L309.6 613.9" fill="none" stroke="#e1e1e1" stroke-width="0.4"/><path d="M309.6 613.9 L304.3 611.8" fill="none" stroke="#e1e1e1" stroke-width="0.4"/><path d="M309.6 613.9 L314.5 609.3" fill="none" stroke="#e1e1e1" stroke-width="0.4"/><path d="M314.5 609.3 L315.3 606.4" fill="none" stroke="#e1e1e1" stroke-width="0.4"/><path d="M315.3 606.4 L311.3 601.8" fill="none" stroke="#e1e1e1" stroke-width="0.4"/><path d="M311.3 601.8 L306.0 600.6" fill="none" stroke="#e1e1e1" stroke-width="0.4"/><path d="M311.3 601.8 L316.9 594.2" fill="none" stroke="#e1e1e1" stroke-width="0.4"/><path d="M316.9 594.2 L312.6 590.8" fill="none" stroke="#e1e1e1" stroke-width="0.4"/><path d="M313.8 582.5 L314.5 582.1" fill="none" stroke="#e1e1e1" stroke-width="0.4"/><path d="M314.5 582.1 L311.7 570.4" fill="none" stroke="#e1e1e1" stroke-width="0.4"/><path d="M311.3 621.7 L315.0 621.4" fill="none" stroke="#e1e1e1" stroke-width="0.4"/><path d="M317.9 613.0 L314.5 609.3" fill="none" stroke="#e1e1e1" stroke-width="0.4"/><path d="M314.5 582.1 L318.3 581.8" fill="none" stroke="#e1e1e1" stroke-width="0.4"/><path d="M316.9 594.2 L320.4 594.0" fill="none" stroke="#e1e1e1" stroke-width="0.4"/><path d="M320.4 594.0 L322.9 591.6" fill="none" stroke="#e1e1e1" stroke-width="0.4"/><path d="M322.9 591.6 L322.3 588.3" fill="none" stroke="#e1e1e1" stroke-width="0.4"/><path d="M322.4 602.9 L320.4 594.0" fill="none" stroke="#e1e1e1" stroke-width="0.4"/><path d="M315.3 606.4 L321.1 604.9" fill="none" stroke="#e1e1e1" stroke-width="0.4"/><path d="M327.2 592.4 L322.9 591.6" fill="none" stroke="#e1e1e1" stroke-width="0.4"/><path d="M218.1 609.9 L214.1 611.4" fill="none" stroke="#e1e1e1" stroke-width="0.4"/><path d="M216.6 626.1 L223.5 624.4" fill="none" stroke="#e1e1e1" stroke-width="0.4"/><path d="M223.5 624.4 L225.9 615.1" fill="none" stroke="#e1e1e1" stroke-width="0.4"/><path d="M225.9 615.1 L218.1 609.9" fill="none" stroke="#e1e1e1" stroke-width="0.4"/><path d="M218.1 609.9 L221.1 601.5" fill="none" stroke="#e1e1e1" stroke-width="0.4"/><path d="M221.1 601.5 L219.2 600.0" fill="none" stroke="#e1e1e1" stroke-width="0.4"/><path d="M219.2 600.0 L209.6 600.0" fill="none" stroke="#e1e1e1" stroke-width="0.4"/><path d="M219.2 600.0 L216.9 590.8" fill="none" stroke="#e1e1e1" stroke-width="0.4"/><path d="M221.1 601.5 L223.8 600.9" fill="none" stroke="#e1e1e1" stroke-width="0.4"/><path d="M223.8 600.9 L226.2 592.5" fill="none" stroke="#e1e1e1" stroke-width="0.4"/><path d="M224.6 641.9 L215.4 638.8" fill="none" stroke="#e1e1e1" stroke-width="0.4"/><path d="M233.6 630.6 L223.5 624.4" fill="none" stroke="#e1e1e1" stroke-width="0.4"/><path d="M245.0 603.7 L236.4 614.0" fill="none" stroke="#e1e1e1" stroke-width="0.4"/><path d="M236.4 614.0 L241.9 621.9" fill="none" stroke="#e1e1e1" stroke-width="0.4"/><path d="M225.9 615.1 L232.2 611.9" fill="none" stroke="#e1e1e1" stroke-width="0.4"/><path d="M232.2 611.9 L230.9 603.3" fill="none" stroke="#e1e1e1" stroke-width="0.4"/><path d="M230.9 603.3 L223.8 600.9" fill="none" stroke="#e1e1e1" stroke-width="0.4"/><path d="M236.4 614.0 L232.2 611.9" fill="none" stroke="#e1e1e1" stroke-width="0.4"/><path d="M230.9 603.3 L236.0 598.7" fill="none" stroke="#e1e1e1" stroke-width="0.4"/><path d="M274.6 565.4 L279.5 562.8" fill="none" stroke="#e1e1e1" stroke-width="0.4"/><path d="M279.5 562.8 L277.6 558.1" fill="none" stroke="#e1e1e1" stroke-width="0.4"/><path d="M277.6 558.1 L274.6 558.1" fill="none" stroke="#e1e1e1" stroke-width="0.4"/><path d="M277.6 558.1 L278.9 554.4" fill="none" stroke="#e1e1e1" stroke-width="0.4"/><path d="M278.9 554.4 L278.3 552.6" fill="none" stroke="#e1e1e1" stroke-width="0.4"/><path d="M278.3 552.6 L276.2 551.4" fill="none" stroke="#e1e1e1" stroke-width="0.4"/><path d="M279.5 562.8 L280.2 563.1" fill="none" stroke="#e1e1e1" stroke-width="0.4"/><path d="M280.2 563.1 L283.6 562.6" fill="none" stroke="#e1e1e1" stroke-width="0.4"/><path d="M286.1 559.5 L285.7 555.6" fill="none" stroke="#e1e1e1" stroke-width="0.4"/><path d="M285.7 555.6 L284.9 554.8" fill="none" stroke="#e1e1e1" stroke-width="0.4"/><path d="M284.9 554.8 L278.9 554.4" fill="none" stroke="#e1e1e1" stroke-width="0.4"/><path d="M281.0 569.4 L280.2 563.1" fill="none" stroke="#e1e1e1" stroke-width="0.4"/><path d="M278.3 552.6 L280.1 550.1" fill="none" stroke="#e1e1e1" stroke-width="0.4"/><path d="M322.1 530.7 L326.0 541.4" fill="none" stroke="#e1e1e1" stroke-width="0.4"/><path d="M326.0 541.4 L332.0 543.4" fill="none" stroke="#e1e1e1" stroke-width="0.4"/><path d="M293.1 542.6 L295.8 543.3" fill="none" stroke="#e1e1e1" stroke-width="0.4"/><path d="M295.8 543.3 L297.3 542.2" fill="none" stroke="#e1e1e1" stroke-width="0.4"/><path d="M297.3 542.2 L297.5 541.1" fill="none" stroke="#e1e1e1" stroke-width="0.4"/><path d="M284.9 554.8 L285.7 550.3" fill="none" stroke="#e1e1e1" stroke-width="0.4"/><path d="M285.7 550.3 L283.7 549.6" fill="none" stroke="#e1e1e1" stroke-width="0.4"/><path d="M285.7 555.6 L291.7 554.0" fill="none" stroke="#e1e1e1" stroke-width="0.4"/><path d="M291.7 554.0 L291.1 550.1" fill="none" stroke="#e1e1e1" stroke-width="0.4"/><path d="M291.1 550.1 L290.5 549.4" fill="none" stroke="#e1e1e1" stroke-width="0.4"/><path d="M290.5 549.4 L287.3 549.1" fill="none" stroke="#e1e1e1" stroke-width="0.4"/><path d="M287.3 549.1 L285.7 550.3" fill="none" stroke="#e1e1e1" stroke-width="0.4"/><path d="M287.3 549.1 L286.4 546.9" fill="none" stroke="#e1e1e1" stroke-width="0.4"/><path d="M291.1 550.1 L297.8 548.2" fill="none" stroke="#e1e1e1" stroke-width="0.4"/><path d="M297.8 548.2 L295.8 543.3" fill="none" stroke="#e1e1e1" stroke-width="0.4"/><path d="M291.8 543.2 L290.5 549.4" fill="none" stroke="#e1e1e1" stroke-width="0.4"/><path d="M294.3 556.4 L291.7 554.0" fill="none" stroke="#e1e1e1" stroke-width="0.4"/><path d="M296.4 556.4 L297.9 556.3" fill="none" stroke="#e1e1e1" stroke-width="0.4"/><path d="M297.9 556.3 L300.6 550.3" fill="none" stroke="#e1e1e1" stroke-width="0.4"/><path d="M300.6 550.3 L297.8 548.2" fill="none" stroke="#e1e1e1" stroke-width="0.4"/><path d="M300.6 550.3 L303.3 549.4" fill="none" stroke="#e1e1e1" stroke-width="0.4"/><path d="M303.3 549.4 L303.8 542.0" fill="none" stroke="#e1e1e1" stroke-width="0.4"/><path d="M303.8 542.0 L303.7 541.9" fill="none" stroke="#e1e1e1" stroke-width="0.4"/><path d="M303.7 541.9 L297.3 542.2" fill="none" stroke="#e1e1e1" stroke-width="0.4"/><path d="M297.9 556.4 L297.9 556.3" fill="none" stroke="#e1e1e1" stroke-width="0.4"/><path d="M306.5 555.1 L303.8 549.5" fill="none" stroke="#e1e1e1" stroke-width="0.4"/><path d="M303.8 549.5 L303.3 549.4" fill="none" stroke="#e1e1e1" stroke-width="0.4"/><path d="M303.8 539.8 L303.7 541.9" fill="none" stroke="#e1e1e1" stroke-width="0.4"/><path d="M303.8 542.0 L310.6 543.1" fill="none" stroke="#e1e1e1" stroke-width="0.4"/><path d="M310.6 543.1 L312.5 540.2" fill="none" stroke="#e1e1e1" stroke-width="0.4"/><path d="M312.5 540.2 L312.8 536.2" fill="none" stroke="#e1e1e1" stroke-width="0.4"/><path d="M303.8 549.5 L309.5 548.7" fill="none" stroke="#e1e1e1" stroke-width="0.4"/><path d="M309.5 548.7 L310.9 547.3" fill="none" stroke="#e1e1e1" stroke-width="0.4"/><path d="M310.9 547.3 L310.6 543.1" fill="none" stroke="#e1e1e1" stroke-width="0.4"/><path d="M311.5 554.1 L309.5 548.7" fill="none" stroke="#e1e1e1" stroke-width="0.4"/><path d="M312.5 540.2 L316.8 543.6" fill="none" stroke="#e1e1e1" stroke-width="0.4"/><path d="M316.8 543.6 L319.4 542.2" fill="none" stroke="#e1e1e1" stroke-width="0.4"/><path d="M319.4 542.2 L318.7 532.7" fill="none" stroke="#e1e1e1" stroke-width="0.4"/><path d="M310.9 547.3 L316.4 548.3" fill="none" stroke="#e1e1e1" stroke-width="0.4"/><path d="M316.4 548.3 L316.8 543.6" fill="none" stroke="#e1e1e1" stroke-width="0.4"/><path d="M316.8 553.3 L317.2 549.0" fill="none" stroke="#e1e1e1" stroke-width="0.4"/><path d="M317.2 549.0 L316.4 548.3" fill="none" stroke="#e1e1e1" stroke-width="0.4"/><path d="M317.2 549.0 L322.4 547.9" fill="none" stroke="#e1e1e1" stroke-width="0.4"/><path d="M322.4 547.9 L322.9 544.1" fill="none" stroke="#e1e1e1" stroke-width="0.4"/><path d="M322.9 544.1 L319.4 542.2" fill="none" stroke="#e1e1e1" stroke-width="0.4"/><path d="M325.2 553.3 L325.1 550.3" fill="none" stroke="#e1e1e1" stroke-width="0.4"/><path d="M325.1 550.3 L322.4 547.9" fill="none" stroke="#e1e1e1" stroke-width="0.4"/><path d="M325.1 550.3 L332.4 546.0" fill="none" stroke="#e1e1e1" stroke-width="0.4"/><path d="M326.0 541.4 L322.9 544.1" fill="none" stroke="#e1e1e1" stroke-width="0.4"/><path d="M325.3 572.7 L332.7 565.3" fill="none" stroke="#e1e1e1" stroke-width="0.4"/><path d="M332.7 565.3 L325.6 551.1" fill="none" stroke="#e1e1e1" stroke-width="0.4"/><path d="M334.5 545.8 L341.4 558.5" fill="none" stroke="#e1e1e1" stroke-width="0.4"/><path d="M341.4 558.5 L350.5 555.8" fill="none" stroke="#e1e1e1" stroke-width="0.4"/><path d="M350.5 555.8 L350.5 547.1" fill="none" stroke="#e1e1e1" stroke-width="0.4"/><path d="M343.8 575.8 L333.2 565.2" fill="none" stroke="#e1e1e1" stroke-width="0.4"/><path d="M333.2 565.2 L332.7 565.3" fill="none" stroke="#e1e1e1" stroke-width="0.4"/><path d="M333.2 565.2 L340.8 560.7" fill="none" stroke="#e1e1e1" stroke-width="0.4"/><path d="M340.8 560.7 L341.4 558.5" fill="none" stroke="#e1e1e1" stroke-width="0.4"/><path d="M344.3 575.8 L345.8 567.4" fill="none" stroke="#e1e1e1" stroke-width="0.4"/><path d="M345.8 567.4 L340.8 560.7" fill="none" stroke="#e1e1e1" stroke-width="0.4"/><path d="M347.8 578.4 L358.0 574.1" fill="none" stroke="#e1e1e1" stroke-width="0.4"/><path d="M358.0 574.1 L359.8 568.6" fill="none" stroke="#e1e1e1" stroke-width="0.4"/><path d="M359.8 568.6 L355.4 563.8" fill="none" stroke="#e1e1e1" stroke-width="0.4"/><path d="M355.4 563.8 L345.8 567.4" fill="none" stroke="#e1e1e1" stroke-width="0.4"/><path d="M355.4 563.8 L354.7 559.2" fill="none" stroke="#e1e1e1" stroke-width="0.4"/><path d="M354.7 559.2 L350.5 555.8" fill="none" stroke="#e1e1e1" stroke-width="0.4"/><path d="M354.7 559.2 L364.0 552.2" fill="none" stroke="#e1e1e1" stroke-width="0.4"/><path d="M364.0 552.2 L364.0 547.7" fill="none" stroke="#e1e1e1" stroke-width="0.4"/><path d="M362.8 581.1 L358.0 574.1" fill="none" stroke="#e1e1e1" stroke-width="0.4"/><path d="M359.8 568.6 L372.0 565.4" fill="none" stroke="#e1e1e1" stroke-width="0.4"/><path d="M372.0 565.4 L373.3 563.9" fill="none" stroke="#e1e1e1" stroke-width="0.4"/><path d="M373.3 563.9 L364.0 552.2" fill="none" stroke="#e1e1e1" stroke-width="0.4"/><path d="M371.0 583.0 L372.0 581.8" fill="none" stroke="#e1e1e1" stroke-width="0.4"/><path d="M372.0 581.8 L372.0 565.4" fill="none" stroke="#e1e1e1" stroke-width="0.4"/><path d="M373.3 563.9 L377.0 563.0" fill="none" stroke="#e1e1e1" stroke-width="0.4"/><path d="M377.0 563.0 L379.2 548.2" fill="none" stroke="#e1e1e1" stroke-width="0.4"/><path d="M387.9 579.9 L386.5 579.1" fill="none" stroke="#e1e1e1" stroke-width="0.4"/><path d="M386.5 579.1 L372.0 581.8" fill="none" stroke="#e1e1e1" stroke-width="0.4"/><path d="M386.5 579.1 L379.6 563.9" fill="none" stroke="#e1e1e1" stroke-width="0.4"/><path d="M379.6 563.9 L377.0 563.0" fill="none" stroke="#e1e1e1" stroke-width="0.4"/><path d="M397.3 568.3 L387.9 561.8" fill="none" stroke="#e1e1e1" stroke-width="0.4"/><path d="M387.9 561.8 L379.6 563.9" fill="none" stroke="#e1e1e1" stroke-width="0.4"/><path d="M394.4 549.8 L387.9 561.8" fill="none" stroke="#e1e1e1" stroke-width="0.4"/><path d="M159.3 534.4 L170.2 512.7" fill="none" stroke="#e1e1e1" stroke-width="0.4"/><path d="M184.2 549.6 L182.5 537.8" fill="none" stroke="#e1e1e1" stroke-width="0.4"/><path d="M182.5 537.8 L175.2 534.1" fill="none" stroke="#e1e1e1" stroke-width="0.4"/><path d="M175.2 534.1 L163.0 539.3" fill="none" stroke="#e1e1e1" stroke-width="0.4"/><path d="M175.2 534.1 L178.0 516.9" fill="none" stroke="#e1e1e1" stroke-width="0.4"/><path d="M182.5 537.8 L196.4 526.7" fill="none" stroke="#e1e1e1" stroke-width="0.4"/><path d="M198.3 525.2 L203.3 521.2" fill="none" stroke="#e1e1e1" stroke-width="0.4"/><path d="M194.5 549.6 L199.3 540.7" fill="none" stroke="#e1e1e1" stroke-width="0.4"/><path d="M214.1 554.3 L211.3 540.4" fill="none" stroke="#e1e1e1" stroke-width="0.4"/><path d="M222.2 551.3 L225.9 541.5" fill="none" stroke="#e1e1e1" stroke-width="0.4"/><path d="M318.1 570.2 L314.7 573.5 L316.8 577.8 L319.5 581.0 L321.3 583.0 L322.6 586.0 L325.8 584.8 L329.0 583.8 L332.3 582.9 L334.6 580.8 L333.0 578.8 L330.0 577.2 L327.5 574.5 L324.5 572.0 L321.5 570.8Z" fill="#1f6db2" stroke="#1f6db2" stroke-width="0.4" stroke-linejoin="round"/><path d="M364.3 577.0 L367.5 577.3 L367.5 580.7 L365.0 580.5Z" fill="#90cbf9" stroke="#90cbf9" stroke-width="0.2" stroke-linejoin="round"/><path d="M295.8 542.1 L299.3 541.3 L304.8 542.1 L304.0 549.4 L296.7 547.2Z" fill="#90cbf9" stroke="#ffffff" stroke-width="0.3" stroke-linejoin="round"/><path d="M388.0 622.1 L395.7 616.5 L404.0 611.7 L408.9 612.4 L411.0 615.9 L414.5 611.7 L419.3 619.3 L424.2 624.9 L424.2 631.9 L420.0 638.8 L413.8 639.5 L408.2 634.6 L401.2 631.9 L390.8 635.3 L388.0 629.0Z" fill="#90cbf9" stroke="#90cbf9" stroke-width="0.3" stroke-linejoin="round"/><path d="M416.0 641.6 L420.0 641.6 L418.5 645.8Z" fill="#90cbf9" stroke="#90cbf9" stroke-width="0.3" stroke-linejoin="round"/><path d="M445.0 636.0 L447.2 638.0 L441.0 646.0 L438.0 650.0 L437.4 647.0 L442.0 641.0Z" fill="#f4f4f4" stroke="#dcdcdc" stroke-width="0.45" stroke-linejoin="round"/></svg>
<div class="r" style="left:122px;top:668.4px;width:99.4px;height:6.6px;background:linear-gradient(90deg,#8fcdfb,#1e66ab);"></div>
<div class="t" style="left:114.30px;top:668.26px;font-size:8.400px;color:#3c434a;transform:scaleX(0.8929);transform-origin:left top;-webkit-text-stroke-width:0.2px;">1</div>
<div class="t" style="left:224.80px;top:668.26px;font-size:8.400px;color:#3c434a;transform:scaleX(0.8929);transform-origin:left top;-webkit-text-stroke-width:0.2px;">2</div>
<svg class="r" style="left:0px;top:10px" width="14" height="12" viewBox="0 10 14 12"><path d="M7.4 12.6C4.8 12.6 2.7 14.8 2.7 17.4V20.3H12.1V17.4C12.1 14.8 10 12.6 7.4 12.6Z" fill="#a7aaad"/><path d="M6.6 19.2L8.6 14.9L9.2 15.2L7.8 19.6Z" fill="#1d2327"/><circle cx="4.3" cy="17.6" r="0.45" fill="#1d2327"/><circle cx="5.3" cy="15.1" r="0.45" fill="#1d2327"/><circle cx="7.4" cy="14" r="0.45" fill="#1d2327"/><circle cx="10.5" cy="17.6" r="0.45" fill="#1d2327"/></svg>
<svg class="r" style="left:0px;top:34px" width="14" height="14" viewBox="0 34 14 14"><path d="M8.4 37L12 40.6L10.6 41L8.7 42.3L7.6 44.8L6.2 43.4L2.8 46.8L2.2 46.2L5.6 42.8L4 41.3L6.5 40.3L7.9 38.4Z" fill="#a7aaad"/></svg>
<svg class="r" style="left:0px;top:54px" width="14" height="14" viewBox="0 54 14 14"><path d="M1.95 57.2H3.9L4.4 56H6.5L7 57.2H8.85V62.1H1.95Z" fill="#a7aaad"/><circle cx="5.4" cy="59.5" r="1.25" fill="#1d2327"/><path d="M9.6 58.9H12.4V65.2H11.1V60.2H9.6Z" fill="#a7aaad"/><circle cx="7" cy="64.6" r="1.3" fill="#a7aaad"/><circle cx="10.8" cy="64.8" r="1.3" fill="#a7aaad"/><path d="M7.9 62.5V64.5" stroke="#a7aaad" stroke-width="1"/></svg>
<svg class="r" style="left:0px;top:74px" width="14" height="12" viewBox="0 74 14 12"><path d="M5 75.5H10.9V83.2H5Z" fill="#a7aaad"/><path d="M3 77H4.4V84.2H9.6V84.9H3Z" fill="#a7aaad"/></svg>
<svg class="r" style="left:0px;top:93px" width="14" height="12" viewBox="0 93 14 12"><path d="M3.4 95H10.5Q10.9 95 10.9 95.4V100.9Q10.9 101.3 10.5 101.3H7.4L5 103.6V101.3H3.4Q3 101.3 3 100.9V95.4Q3 95 3.4 95Z" fill="#a7aaad"/></svg>
<svg class="r" style="left:0px;top:110px" width="14" height="16" viewBox="0 110 14 16"><rect x="2.3" y="113.1" width="9.8" height="9.9" rx="1.3" fill="#ffffff"/><path d="M4.9 116.2H7.4M4.9 118.45H9.5M4.9 120.35H6" stroke="#2271b1" stroke-width="1.2" stroke-linecap="round"/></svg>
<svg class="r" style="left:0px;top:206px" width="14" height="14" viewBox="0 206 14 14"><path d="M6.3 209.1L12 211.5L8.8 214.8L4.5 211.4Z" fill="#a7aaad"/><path d="M6.6 210.2L9.6 213" stroke="#5f6468" stroke-width="0.5"/><path d="M5.6 213.2L6.9 214.3L3.2 217.2L2.2 216.2Z" fill="#a7aaad"/></svg>
<svg class="r" style="left:0px;top:225px" width="14" height="14" viewBox="0 225 14 14"><path d="M4.5 229.9L9.9 234.6L4.5 234.7Z" fill="#a7aaad"/><path d="M7.9 227.8L8.9 228.7L7.3 230.6L6.3 229.7Z" fill="#a7aaad"/><path d="M10.4 230.5L11.4 231.4L9.7 233.2L8.7 232.3Z" fill="#a7aaad"/><path d="M5.2 233.8L3.4 236.8L2.5 236.1L4.4 233.2Z" fill="#a7aaad"/></svg>
<svg class="r" style="left:0px;top:244px" width="14" height="14" viewBox="0 244 14 14"><ellipse cx="7.2" cy="248.7" rx="1.6" ry="1.95" fill="#a7aaad"/><path d="M3 255.7V253.6Q3 251.8 5 251.8H9.1Q11.1 251.8 11.1 253.6V255.7Z" fill="#a7aaad"/></svg>
<svg class="r" style="left:0px;top:263px" width="14" height="14" viewBox="0 263 14 14"><path d="M9.9 266.1C8.6 265.6 7.2 266.3 7.1 267.8C7 268.4 7.1 268.9 7.4 269.3L3.2 273.3C2.7 273.8 2.7 274.5 3.2 275C3.7 275.5 4.4 275.5 4.9 275L9 270.9C9.5 271.2 10.1 271.3 10.7 271.1C11.9 270.8 12.3 269.5 11.9 268.4L10.6 269.4L9.3 268.9L9.2 267.5Z" fill="#a7aaad"/></svg>
<svg class="r" style="left:0px;top:282px" width="14" height="14" viewBox="0 282 14 14"><rect x="3.3" y="285.3" width="8.4" height="7.8" rx="0.4" fill="#a7aaad"/><path d="M5.7 286.6V289.5M9.3 289.3V291.8" stroke="#6d7276" stroke-width="0.7"/><ellipse cx="5.7" cy="290.4" rx="1.2" ry="0.75" fill="#1d2327"/><ellipse cx="9.3" cy="288.3" rx="0.9" ry="0.95" fill="#1d2327"/></svg>
<svg class="r" style="left:0px;top:308px" width="14" height="14" viewBox="0 308 14 14"><path d="M11.95 315.89 L10.19 317.07 L9.78 319.14 L7.71 318.73 L5.96 319.90 L4.78 318.14 L2.71 317.73 L3.12 315.66 L1.95 313.91 L3.71 312.73 L4.12 310.66 L6.19 311.07 L7.94 309.90 L9.12 311.66 L11.19 312.07 L10.78 314.14Z" fill="#a7aaad"/><circle cx="6.95" cy="314.9" r="1.6" fill="#1d2327"/></svg>
<svg class="r" style="left:0px;top:338px" width="14" height="11" viewBox="0 338 14 11"><path d="M1.7 345.9L10.2 339.6C11.9 339.6 12.9 341.5 12.9 343.6C12.9 345.3 12.3 346.7 11.4 347.2L1.7 347.8Z" fill="#a7aaad"/><ellipse cx="11.6" cy="343.3" rx="0.75" ry="2" fill="#1d2327" opacity="0.55"/></svg>
<svg class="r" style="left:0px;top:357px" width="14" height="12" viewBox="0 357 14 12"><circle cx="7.2" cy="363" r="4.6" fill="#a7aaad"/><path d="M8.7 360.6V365.4L5.5 363Z" fill="#1d2327"/></svg>
<svg class="r" style="left:784px;top:22px" width="16" height="16" viewBox="784 22 16 16"><path d="M795.3 24.3L797.2 26.4C797.4 26.7 797.4 27.2 797.1 27.6C795.2 30.6 792.2 33.3 789.2 34.6C788.8 34.8 788.3 34.7 788 34.4L786.9 33.3L789.3 31.4L790.6 32C791.9 31.2 793.6 29.5 794.3 28.2L793.6 26.8Z" fill="#1d2327"/></svg>
<svg class="r" style="left:850px;top:80px" width="14" height="12" viewBox="850 80 14 12"><path d="M856.3 83.3H853.6V89H859.3V86.3" fill="none" stroke="#2271b1" stroke-width="1.1"/><path d="M857.6 82.5H860.8V85.7M860.8 82.5L856.6 86.7" fill="none" stroke="#2271b1" stroke-width="1.1"/></svg>
<svg class="r" style="left:108px;top:126px" width="16" height="14" viewBox="108 126 16 14"><path d="M115.45 129.8C112.9 129.8 110.9 131.9 110.9 134.4V136.6Q110.9 137.5 111.8 137.5H119.1Q120 137.5 120 136.6V134.4C120 131.9 118 129.8 115.45 129.8Z" fill="#3582c4"/><path d="M114.9 136.3L116.3 132.6L116.9 132.8L116 136.6Z" fill="#cfe3f5"/><circle cx="112.6" cy="134.5" r="0.45" fill="#cfe3f5"/><circle cx="113.4" cy="132.4" r="0.45" fill="#cfe3f5"/><circle cx="115.45" cy="131.3" r="0.45" fill="#cfe3f5"/><circle cx="117.5" cy="132.4" r="0.45" fill="#cfe3f5"/><circle cx="118.5" cy="134.5" r="0.45" fill="#cfe3f5"/></svg>
<svg class="r" style="left:188px;top:126px" width="16" height="14" viewBox="188 126 16 14"><path d="M190.3 138V136.4L192 133.4L195.5 136L197.6 133L198.6 129.3L199.8 129.6V138Z" fill="#1d2327"/></svg>
<svg class="r" style="left:268px;top:126px" width="16" height="14" viewBox="268 126 16 14"><path d="M271 129.4H277.2Q277.6 129.4 277.6 129.8V134.5Q277.6 134.9 277.2 134.9H275L273.2 137.6L273.2 134.9H271Q270.6 134.9 270.6 134.5V129.8Q270.6 129.4 271 129.4Z" fill="#1d2327"/></svg>
<svg class="r" style="left:353px;top:126px" width="16" height="14" viewBox="353 126 16 14"><path d="M359.7 129.3L364 130.8C364 134.2 362.5 136.8 359.7 138.3C357 136.8 355.6 134.2 355.6 130.8Z" fill="#1d2327"/><path d="M359.7 130.3L363 131.4C362.9 132.2 362.8 133 362.6 133.6H359.7Z" fill="#fff"/><path d="M356.6 133.6H359.7V137.2C358.2 136.2 357.1 135 356.6 133.6Z" fill="#fff"/></svg>
<svg class="r" style="left:437px;top:126px" width="16" height="14" viewBox="437 126 16 14"><path d="M440.8 133.9V129.6Q440.8 129.1 441.3 129.1H447.5Q448 129.1 448 129.6V133.9H446.9V130.3H441.9V133.9Z" fill="#555"/><path d="M443.6 132H445.2V134.8H446.8L444.4 137.8L442 134.8H443.6Z" fill="#1d2327"/></svg>
</body></html>
